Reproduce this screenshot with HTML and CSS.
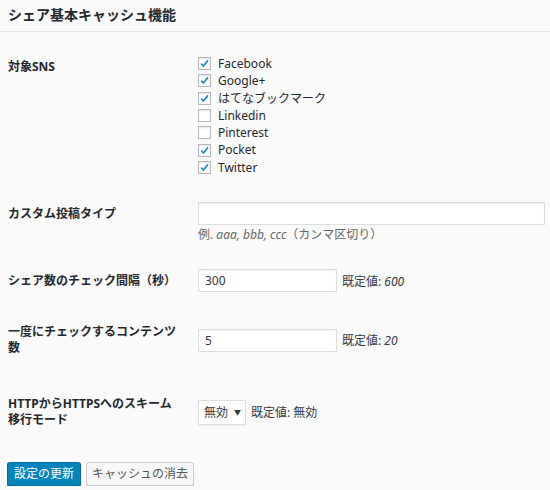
FILE: index.html
```html
<!DOCTYPE html>
<html lang="ja">
<head>
<meta charset="utf-8">
<title>シェア基本キャッシュ機能</title>
<link rel="stylesheet" href="styles.css">
</head>
<body>
<div class="wrap">
	<h2 class="title">シェア基本キャッシュ機能</h2>

	<div class="row row_sns">
		<div class="th">対象SNS</div>
		<ul class="sns_list">
			<li><span class="box on"><svg viewBox="0 0 13 13"><path d="M2.6 6.6 L5.2 9.4 L10.6 2.8"/></svg></span>Facebook</li>
			<li><span class="box on"><svg viewBox="0 0 13 13"><path d="M2.6 6.6 L5.2 9.4 L10.6 2.8"/></svg></span>Google+</li>
			<li><span class="box on"><svg viewBox="0 0 13 13"><path d="M2.6 6.6 L5.2 9.4 L10.6 2.8"/></svg></span>はてなブックマーク</li>
			<li><span class="box"></span>Linkedin</li>
			<li><span class="box"></span>Pinterest</li>
			<li><span class="box on"><svg viewBox="0 0 13 13"><path d="M2.6 6.6 L5.2 9.4 L10.6 2.8"/></svg></span>Pocket</li>
			<li><span class="box on"><svg viewBox="0 0 13 13"><path d="M2.6 6.6 L5.2 9.4 L10.6 2.8"/></svg></span>Twitter</li>
		</ul>
	</div>

	<div class="row row_type">
		<div class="th">カスタム投稿タイプ</div>
		<div class="td">
			<div class="input wide"></div>
			<p class="desc">例. <i>aaa, bbb, ccc</i>（カンマ区切り）</p>
		</div>
	</div>

	<div class="row row_mid">
		<div class="th">シェア数のチェック間隔（秒）</div>
		<div class="td line">
			<div class="input">300</div>
			<span class="def">既定値: <i>600</i></span>
		</div>
	</div>

	<div class="row row_num">
		<div class="th">一度にチェックするコンテンツ数</div>
		<div class="td line">
			<div class="input">5</div>
			<span class="def">既定値: <i>20</i></span>
		</div>
	</div>

	<div class="row row_scheme">
		<div class="th">HTTPからHTTPSへのスキーム移行モード</div>
		<div class="td line">
			<div class="select">無効<span class="arrow">▼</span></div>
			<span class="def">既定値: 無効</span>
		</div>
	</div>

	<div class="btns">
		<span class="btn primary">設定の更新</span>
		<span class="btn">キャッシュの消去</span>
	</div>
</div>
</body>
</html>
```

FILE: styles.css
```css
html,body {margin:0;padding:0;}
body {background:#fafafa;color:#23282d;font-family:"Noto Sans","Noto Sans CJK JP",sans-serif;font-size:12px;}
ul {margin:0;padding:0;} li {list-style:none;} p {margin:0;}
i {font-style:italic;}

.wrap {padding:0 5px 0 8px;}
.title {margin:0 -5px 0 -8px;padding:5px 0 6px 8px;font-size:14px;line-height:20px;font-weight:bold;border-bottom:1px solid #e3e3e3;}

.row {display:flex;}
.th {width:172px;padding-right:18px;flex:none;font-weight:bold;line-height:16px;}
.td {flex:1;}
.line {display:flex;align-items:center;}

.row_sns {padding-top:23px;}
.row_sns .th {padding-top:4px;}
.sns_list li {display:flex;align-items:center;height:17.3px;line-height:17.3px;}
.box {width:11px;height:11px;border:1px solid #b4b9be;background:#fff;margin-right:7px;box-shadow:inset 0 1px 2px rgba(0,0,0,.1);}
.box svg {display:block;width:11px;height:11px;}
.box path {fill:none;stroke:#1e8cbe;stroke-width:1.9;}

.row_type {margin-top:26px;}
.row_type .th {line-height:23px;}
.input {box-sizing:border-box;height:23px;width:139px;border:1px solid #ddd;background:#fff;box-shadow:inset 0 1px 2px rgba(0,0,0,.07);padding:0 6px;line-height:21px;color:#32373c;}
.input.wide {width:auto;}
.desc {margin-top:2px;line-height:16px;color:#666;}

.row_mid {margin-top:26px;align-items:center;}
.row_num {margin-top:32px;align-items:center;}
.row_scheme {margin-top:40px;align-items:center;}
.def {margin-left:5px;color:#32373c;}

.select {box-sizing:border-box;width:48px;height:25px;border:1px solid #ddd;background:#fff;box-shadow:0 1px 2px rgba(0,0,0,.07);display:flex;align-items:center;padding-left:5px;color:#32373c;}
.select .arrow {font-size:7px;margin-left:6px;}

.btns {margin-top:34px;margin-left:-1px;display:flex;gap:5px;}
.btn {box-sizing:border-box;height:24px;line-height:22px;padding:0 5px;border:1px solid #ccc;border-radius:3px;background:#f7f7f7;color:#555;box-shadow:0 1px 0 #ccc;}
.btn.primary {background:#0085ba;border-color:#0073aa #006799 #006799;color:#fff;box-shadow:0 1px 0 #006799;padding:0 6px;}
```
